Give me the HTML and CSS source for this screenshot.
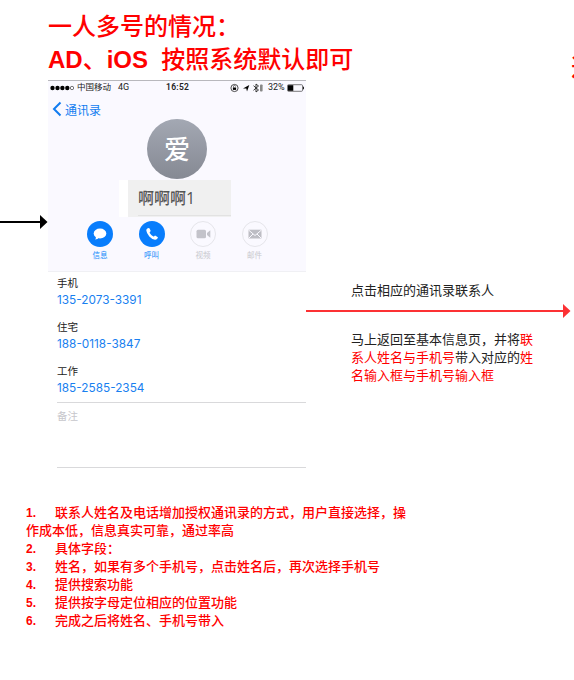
FILE: index.html
```html
<!DOCTYPE html>
<html lang="zh-CN">
<head>
<meta charset="utf-8">
<title>一人多号的情况</title>
<link rel="stylesheet" href="styles.css">
</head>
<body>
<main class="board">
  <header class="head">
    <h1 class="title">一人多号的情况：<br><b>AD</b>、<b>iOS&nbsp; </b>按照系统默认即可</h1>
    <span class="next">选</span>
  </header>
  <div class="flow">
    <svg class="arrow-in" width="48" height="16" viewBox="0 0 48 16"><path d="M0 8H41" stroke="#000" stroke-width="2"/><path d="M40 1L47.500 8L40 15Z"/></svg>
    <section class="phone">
      <div class="top">
        <div class="status">
          <svg class="dots" width="24" height="6" viewBox="0 0 24 6"><circle cx="2.500" cy="3" r="2.200"/><circle cx="7.500" cy="3" r="2.200"/><circle cx="12.400" cy="3" r="2.200"/><circle cx="17.300" cy="3" r="2.200"/><circle cx="22" cy="3" r="1.700" fill="none" stroke="#222" stroke-width=".6"/></svg>
          <span class="carrier">中国移动</span><span class="net">4G</span><b class="time">16:52</b>
          <svg class="sys" width="34" height="10" viewBox="0 0 34 10"><circle cx="4.500" cy="5" r="3.600" fill="none" stroke="#222" stroke-width=".8"/><rect x="2.900" y="4.500" width="3.200" height="2.400"/><path d="M3.500 4.500V3.500a1 1 0 0 1 2 0" fill="none" stroke="#222" stroke-width=".6"/><path d="M13 5.500L19.300 2L17 8.500L16.300 5.600Z"/><path d="M23.500 2.700L28.500 7L26 9V1L28.500 3L23.500 7.300" fill="none" stroke="#222" stroke-width=".9"/><rect x="30" y="1.500" width="2.600" height="7" rx=".8" fill="#888"/></svg>
          <span class="pct">32%</span>
          <svg class="battery" width="18" height="8" viewBox="0 0 18 8"><rect x=".5" y=".7" width="15" height="6.600" rx="1" fill="none" stroke="#444" stroke-width=".7"/><rect x="1" y="1.200" width="5.300" height="5.600"/><path d="M16.500 2.700v2.600" stroke="#222"/></svg>
        </div>
        <div class="back"><svg width="10" height="16" viewBox="0 0 10 16"><path d="M8.500 1.500L2 8L8.500 14.500" fill="none" stroke="#117cf0" stroke-width="2"/></svg><span>通讯录</span></div>
        <div class="avatar">爱</div>
        <div class="name"><span>啊啊啊<i>1</i></span></div>
        <div class="actions">
          <div class="action"><svg width="26" height="26" viewBox="0 0 26 26"><circle cx="13" cy="13" r="13" fill="#087dfc"/><ellipse cx="13" cy="12.500" rx="6.300" ry="5" fill="#fff"/><path d="M9 15.500Q9 18 7.800 18.600Q11 18.500 12 16.500Z" fill="#fff"/></svg><span>信息</span></div>
          <div class="action"><svg width="26" height="26" viewBox="0 0 26 26"><circle cx="13" cy="13" r="13" fill="#087dfc"/><path d="M8.300 7.500L9.700 7Q10.300 7 10.600 7.600L11.600 9.700Q11.700 10.300 11 10.900Q10.400 11.400 10.700 12Q12.200 14.500 14.400 15.600Q15 15.700 15.400 15Q15.800 14.400 16.500 14.700L18.500 15.900Q19.200 16.400 18.800 17.100Q17.800 19 16 18.800Q13 18.300 10.300 15.400Q7.700 12.500 7.300 9.500Q7.300 8.200 8.300 7.500Z" fill="#fff"/></svg><span>呼叫</span></div>
          <div class="action off"><svg width="26" height="26" viewBox="0 0 26 26"><circle cx="13" cy="13" r="12.500" fill="none" stroke="#e5e5ea"/><rect x="6.500" y="8.700" width="9.500" height="8.600" rx="1.500" fill="#c3c3ca"/><path d="M17 12L20.300 9.300V16.700L17 14Z" fill="#c3c3ca"/></svg><span>视频</span></div>
          <div class="action off"><svg width="26" height="26" viewBox="0 0 26 26"><circle cx="13" cy="13" r="12.500" fill="none" stroke="#e5e5ea"/><rect x="6.500" y="8.700" width="13" height="8.800" fill="#bdbdc4"/><path d="M6.500 9L13 14.500L19.500 9M6.500 17.500L11 13M19.500 17.500L15 13" fill="none" stroke="#faf9ff" stroke-width="1"/></svg><span>邮件</span></div>
        </div>
      </div>
      <dl class="fields">
        <dt>手机</dt><dd>135-2073-3391</dd>
        <dt>住宅</dt><dd>188-0118-3847</dd>
        <dt>工作</dt><dd>185-2585-2354</dd>
      </dl>
      <div class="memo">备注</div>
    </section>
    <section class="step">
      <p class="tap">点击相应的通讯录联系人</p>
      <svg class="arrow-out" width="266" height="16" viewBox="0 0 266 16"><path d="M0 8H258" stroke="#fc3134" stroke-width="2"/><path d="M257 1L264.500 8L257 15Z" fill="#fc3134"/></svg>
      <p class="result">马上返回至基本信息页，并将<em>联系人姓名与手机号</em>带入对应的<em>姓名输入框与手机号输入框</em></p>
    </section>
  </div>
  <ol class="notes">
    <li>联系人姓名及电话增加授权通讯录的方式，用户直接选择，操作成本低，信息真实可靠，通过率高</li>
    <li>具体字段：</li>
    <li>姓名，如果有多个手机号，点击姓名后，再次选择手机号</li>
    <li>提供搜索功能</li>
    <li>提供按字母定位相应的位置功能</li>
    <li>完成之后将姓名、手机号带入</li>
  </ol>
</main>
</body>
</html>
```
FILE: styles.css
```css
* { box-sizing: border-box; }
body { margin: 0; background: #fff; font-family: "Liberation Sans", "Noto Sans CJK SC", sans-serif; }
.board { width: 574px; height: 680px; overflow: hidden; }
svg { display: block; flex: none; }
h1, p, ol, dl, dd { margin: 0; padding: 0; }

.head { display: flex; height: 80px; padding: 10px 0 0 48px; overflow: hidden; color: #f00; font-size: 24px; line-height: 33px; }
.title { flex: none; width: 523px; font-size: 24px; font-weight: 500; }
.title b { font-weight: 700; }
.next { flex: none; margin-top: 41px; font-weight: 500; }

.flow { display: flex; height: 388px; }
.arrow-in { margin-top: 134px; }
.phone { flex: none; width: 258px; }
.top { height: 192px; background: #faf9ff; border-top: 1px solid #b8b8bd; border-bottom: 1px solid #f0f0f4; }
.status { display: flex; align-items: center; height: 13px; padding-left: 2px; font: 8.5px/13px Roboto, "Noto Sans CJK SC", sans-serif; color: #222; }
.carrier { width: 41px; margin-left: 3px; }
.net { width: 48px; font-size: 9px; }
.time { width: 64px; font-weight: 600; letter-spacing: .3px; }
.pct { width: 19px; margin-left: 4px; font-size: 9px; }
.back { display: flex; align-items: center; gap: 3px; height: 24px; margin-top: 3px; padding-left: 4px; font-size: 12px; color: #117cf0; }
.avatar { width: 60px; height: 60px; margin: -2px 0 0 99px; border-radius: 50%; background: linear-gradient(#a3a8b3, #858993); color: #fff; font-size: 26px; font-weight: 500; line-height: 62px; text-align: center; }
.name { width: 112px; height: 37px; margin: 1px 0 0 71px; padding-left: 10px; border-left: 9px solid #fff; background: #f0f0f0; font: 500 16px/34px "Noto Sans CJK SC", sans-serif; color: #555; }
.name span { display: block; height: 36px; border-bottom: 1px solid #e2e2e2; }
.name i { font-family: "Open Sans", sans-serif; font-style: normal; font-weight: 500; line-height: 1; }
.actions { display: flex; gap: 25.500px; margin: 4px 0 0 39px; }
.action { width: 26px; color: #168afa; font-size: 7.500px; line-height: 14px; text-align: center; }
.action span { display: block; margin-top: 2px; }
.off { color: #c8c8cd; }

.fields { height: 131px; margin-left: 9px; padding-top: 3px; border-bottom: 1px solid #d9d9db; }
.fields dt { height: 16px; font-size: 10.500px; line-height: 16px; color: #222; }
.fields dd { height: 28px; font: 11.800px/19px Inter, sans-serif; color: #197ff0; }
.memo { height: 65px; margin-left: 9px; padding-top: 5px; border-bottom: 1px solid #d9d9db; font-size: 10.500px; line-height: 16px; color: #c7c7cc; }

.step { flex: none; width: 268px; padding-top: 202px; font-size: 13px; line-height: 18px; color: #222; }
.tap, .result { width: 184px; margin-left: 45px; }
.arrow-out { margin: 3px 0 12px; }
em { color: #f00; font-style: normal; }

.notes { width: 382px; margin: 36px 0 0 26px; list-style: none; counter-reset: note; color: #f00; font-size: 13px; font-weight: 500; line-height: 18px; }
.notes li { counter-increment: note; }
.notes li::before { content: counter(note) "."; display: inline-block; width: 29px; font-size: 12px; font-weight: 700; }
```
